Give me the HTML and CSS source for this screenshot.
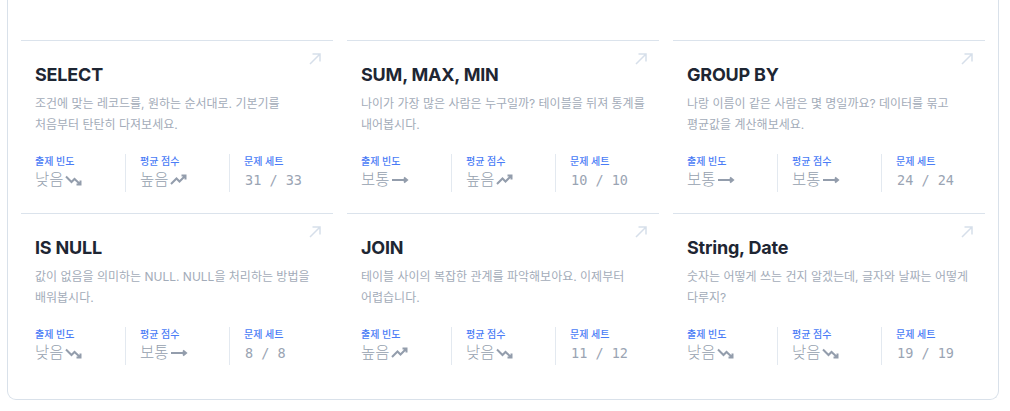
FILE: index.html
```html
<!DOCTYPE html>
<html lang="ko">
<head>
<meta charset="utf-8">
<link rel="stylesheet" href="styles.css">
</head>
<body>
<section class="panel">
  <div class="grid">
    <article class="card">
      <svg class="go" viewBox="0 0 16 16"><path d="M3 13L13 3M5.5 3H13V10.5"/></svg>
      <h3 class="title">SELECT</h3>
      <p class="desc">조건에 맞는 레코드를, 원하는 순서대로. 기본기를 처음부터 탄탄히 다져보세요.</p>
      <div class="stats">
        <div class="stat"><div class="label">출제 빈도</div><div class="value">낮음<svg class="trend" viewBox="0 0 18 12"><path d="M1 2.5L6.5 8L9.5 5L15.5 10.5M11.5 10.5H15.5V6.5"/></svg></div></div>
        <div class="stat"><div class="label">평균 점수</div><div class="value">높음<svg class="trend" viewBox="0 0 18 12"><path d="M1 10L6.5 4.5L9.5 7.5L15.5 1.5M11.5 1.5H15.5V5.5"/></svg></div></div>
        <div class="stat"><div class="label">문제 세트</div><div class="value num">31 / 33</div></div>
      </div>
    </article>
    <article class="card">
      <svg class="go" viewBox="0 0 16 16"><path d="M3 13L13 3M5.5 3H13V10.5"/></svg>
      <h3 class="title">SUM, MAX, MIN</h3>
      <p class="desc">나이가 가장 많은 사람은 누구일까? 테이블을 뒤져 통계를 내어봅시다.</p>
      <div class="stats">
        <div class="stat"><div class="label">출제 빈도</div><div class="value">보통<svg class="trend" viewBox="0 0 18 12"><path d="M1 6H16M13 3.5L16 6L13 8.5"/></svg></div></div>
        <div class="stat"><div class="label">평균 점수</div><div class="value">높음<svg class="trend" viewBox="0 0 18 12"><path d="M1 10L6.5 4.5L9.5 7.5L15.5 1.5M11.5 1.5H15.5V5.5"/></svg></div></div>
        <div class="stat"><div class="label">문제 세트</div><div class="value num">10 / 10</div></div>
      </div>
    </article>
    <article class="card">
      <svg class="go" viewBox="0 0 16 16"><path d="M3 13L13 3M5.5 3H13V10.5"/></svg>
      <h3 class="title">GROUP BY</h3>
      <p class="desc">나랑 이름이 같은 사람은 몇 명일까요? 데이터를 묶고 평균값을 계산해보세요.</p>
      <div class="stats">
        <div class="stat"><div class="label">출제 빈도</div><div class="value">보통<svg class="trend" viewBox="0 0 18 12"><path d="M1 6H16M13 3.5L16 6L13 8.5"/></svg></div></div>
        <div class="stat"><div class="label">평균 점수</div><div class="value">보통<svg class="trend" viewBox="0 0 18 12"><path d="M1 6H16M13 3.5L16 6L13 8.5"/></svg></div></div>
        <div class="stat"><div class="label">문제 세트</div><div class="value num">24 / 24</div></div>
      </div>
    </article>
    <article class="card">
      <svg class="go" viewBox="0 0 16 16"><path d="M3 13L13 3M5.5 3H13V10.5"/></svg>
      <h3 class="title">IS NULL</h3>
      <p class="desc">값이 없음을 의미하는 NULL. NULL을 처리하는 방법을 배워봅시다.</p>
      <div class="stats">
        <div class="stat"><div class="label">출제 빈도</div><div class="value">낮음<svg class="trend" viewBox="0 0 18 12"><path d="M1 2.5L6.5 8L9.5 5L15.5 10.5M11.5 10.5H15.5V6.5"/></svg></div></div>
        <div class="stat"><div class="label">평균 점수</div><div class="value">보통<svg class="trend" viewBox="0 0 18 12"><path d="M1 6H16M13 3.5L16 6L13 8.5"/></svg></div></div>
        <div class="stat"><div class="label">문제 세트</div><div class="value num">8 / 8</div></div>
      </div>
    </article>
    <article class="card">
      <svg class="go" viewBox="0 0 16 16"><path d="M3 13L13 3M5.5 3H13V10.5"/></svg>
      <h3 class="title">JOIN</h3>
      <p class="desc">테이블 사이의 복잡한 관계를 파악해보아요. 이제부터 어렵습니다.</p>
      <div class="stats">
        <div class="stat"><div class="label">출제 빈도</div><div class="value">높음<svg class="trend" viewBox="0 0 18 12"><path d="M1 10L6.5 4.5L9.5 7.5L15.5 1.5M11.5 1.5H15.5V5.5"/></svg></div></div>
        <div class="stat"><div class="label">평균 점수</div><div class="value">낮음<svg class="trend" viewBox="0 0 18 12"><path d="M1 2.5L6.5 8L9.5 5L15.5 10.5M11.5 10.5H15.5V6.5"/></svg></div></div>
        <div class="stat"><div class="label">문제 세트</div><div class="value num">11 / 12</div></div>
      </div>
    </article>
    <article class="card">
      <svg class="go" viewBox="0 0 16 16"><path d="M3 13L13 3M5.5 3H13V10.5"/></svg>
      <h3 class="title">String, Date</h3>
      <p class="desc">숫자는 어떻게 쓰는 건지 알겠는데, 글자와 날짜는 어떻게 다루지?</p>
      <div class="stats">
        <div class="stat"><div class="label">출제 빈도</div><div class="value">낮음<svg class="trend" viewBox="0 0 18 12"><path d="M1 2.5L6.5 8L9.5 5L15.5 10.5M11.5 10.5H15.5V6.5"/></svg></div></div>
        <div class="stat"><div class="label">평균 점수</div><div class="value">낮음<svg class="trend" viewBox="0 0 18 12"><path d="M1 2.5L6.5 8L9.5 5L15.5 10.5M11.5 10.5H15.5V6.5"/></svg></div></div>
        <div class="stat"><div class="label">문제 세트</div><div class="value num">19 / 19</div></div>
      </div>
    </article>
  </div>
</section>
</body>
</html>
```
FILE: styles.css
```css
* { box-sizing: border-box; }
html, body { margin: 0; padding: 0; background: #ffffff; }
body {
  font-family: Inter, "Noto Sans CJK KR", sans-serif;
  color: #1f2937;
}
.panel {
  margin-left: 7px;
  width: 992px;
  padding: 40px 13px 13px;
  border: 1px solid #d9e1ea;
  border-top: none;
  border-radius: 0 0 9px 9px;
}
.grid {
  display: grid;
  grid-template-columns: repeat(3, 312px);
  column-gap: 14px;
}
.card {
  position: relative;
  border-top: 1px solid #dbe3ec;
  padding: 22px 0 21px;
}
.go {
  position: absolute;
  top: 10px;
  right: 10px;
  width: 16px;
  height: 16px;
  fill: none;
  stroke: #d6dfea;
  stroke-width: 1.5;
}
.title {
  margin: 0;
  padding-left: 14px;
  font-size: 18px;
  line-height: 24px;
  font-weight: 700;
  color: #1e2633;
  letter-spacing: -0.2px;
}
.desc {
  margin: 6px 0 0;
  padding: 0 8px 0 14px;
  font-size: 12px;
  line-height: 21px;
  color: #a3acb9;
  height: 42px;
  word-break: keep-all;
}
.stats {
  margin-top: 19px;
  display: grid;
  grid-template-columns: repeat(3, 1fr);
}
.stat {
  padding-left: 14px;
}
.stat + .stat {
  border-left: 1px solid #e3e9f0;
}
.label {
  font-size: 10px;
  line-height: 14px;
  color: #4a7cf6;
  font-weight: 500;
}
.value {
  display: flex;
  align-items: center;
  font-size: 15.5px;
  font-weight: 300;
  line-height: 24px;
  color: #959fae;
}
.num {
  font-family: "DejaVu Sans Mono", monospace;
  font-size: 13.5px;
  font-weight: 400;
  padding-left: 1px;
  color: #9aa4b3;
}
.trend {
  width: 18px;
  height: 12px;
  margin-left: 1px;
  fill: none;
  stroke: #939dac;
  stroke-width: 2;
  stroke-linejoin: miter;
}
```
